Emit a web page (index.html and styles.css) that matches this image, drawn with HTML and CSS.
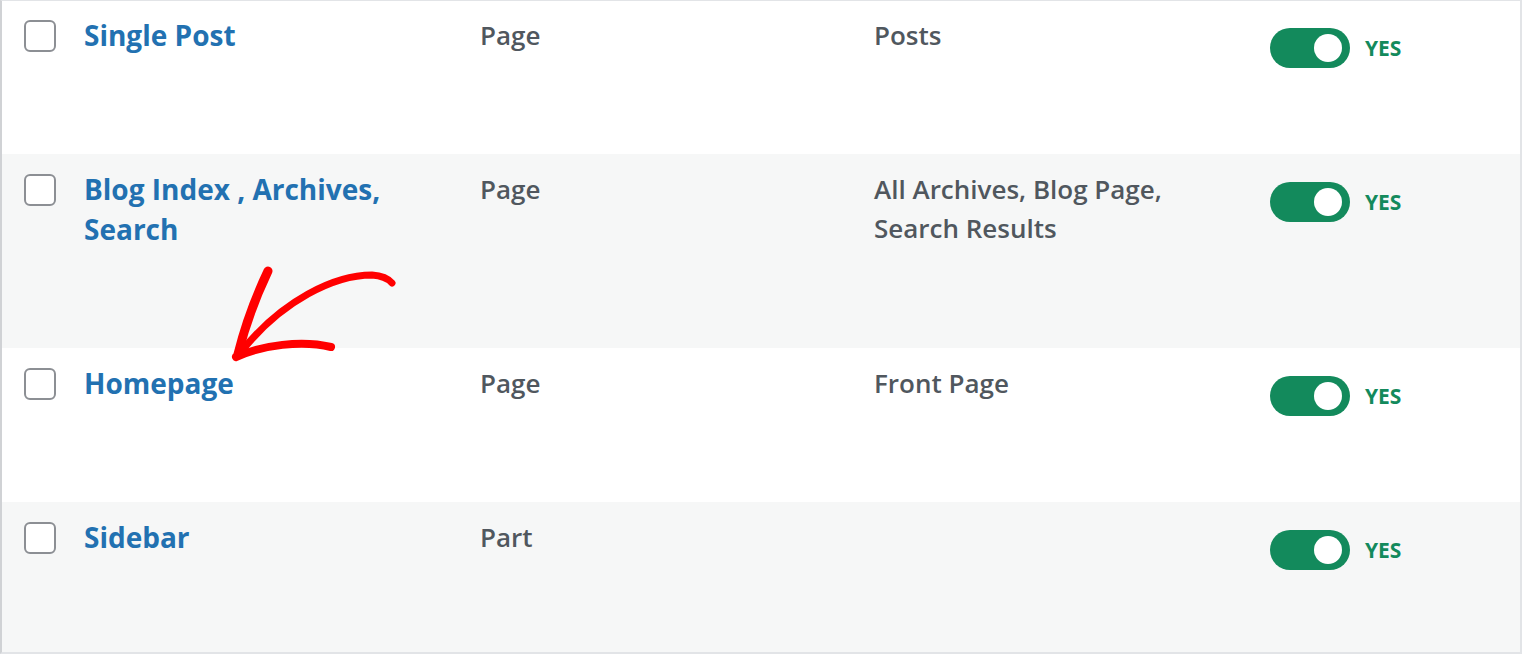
FILE: index.html
```html
<!DOCTYPE html>
<html lang="en">
<head>
<meta charset="utf-8">
<title>Templates</title>
<link rel="stylesheet" href="styles.css">
</head>
<body>
<div class="table">
  <div class="row first">
    <div class="cell-check"><span class="checkbox"></span></div>
    <div class="cell-title"><a class="title" href="#">Single Post</a></div>
    <div class="cell-text">Page</div>
    <div class="cell-cond">Posts</div>
    <div class="cell-toggle"><span class="toggle"><span class="knob"></span></span><span class="yes">YES</span></div>
  </div>
  <div class="row alt">
    <div class="cell-check"><span class="checkbox"></span></div>
    <div class="cell-title"><a class="title" href="#">Blog Index , Archives, Search</a></div>
    <div class="cell-text">Page</div>
    <div class="cell-cond">All Archives, Blog Page, Search Results</div>
    <div class="cell-toggle"><span class="toggle"><span class="knob"></span></span><span class="yes">YES</span></div>
  </div>
  <div class="row">
    <div class="cell-check"><span class="checkbox"></span></div>
    <div class="cell-title"><a class="title" href="#">Homepage</a></div>
    <div class="cell-text">Page</div>
    <div class="cell-cond">Front Page</div>
    <div class="cell-toggle"><span class="toggle"><span class="knob"></span></span><span class="yes">YES</span></div>
  </div>
  <div class="row alt">
    <div class="cell-check"><span class="checkbox"></span></div>
    <div class="cell-title"><a class="title" href="#">Sidebar</a></div>
    <div class="cell-text">Part</div>
    <div class="cell-cond"></div>
    <div class="cell-toggle"><span class="toggle"><span class="knob"></span></span><span class="yes">YES</span></div>
  </div>
  <svg class="arrow" width="1522" height="654" viewBox="0 0 1522 654" aria-hidden="true">
    <g fill="none" stroke="#ff0000" stroke-linecap="round" stroke-linejoin="round">
      <path d="M392 283 Q386 276 372 275 C335 275 282 300 241 352" stroke-width="7"/>
      <path d="M268 271 C258 292 246 322 238 354" stroke-width="9"/>
      <path d="M236 357 C262 345 302 340 331 347" stroke-width="8"/>
    </g>
  </svg>
</div>
</body>
</html>
```
FILE: styles.css
```css
html, body {
  margin: 0;
  padding: 0;
  background: #ffffff;
}

body {
  font-family: "Open Sans", "Liberation Sans", sans-serif;
}

.table {
  position: relative;
  height: 654px;
  box-sizing: border-box;
  overflow: hidden;
  border-top: 1px solid #e2e4e7;
  border-left: 2px solid #d0d2d5;
  border-right: 2px solid #e2e4e7;
  border-bottom: 2px solid #e2e4e7;
  background: #ffffff;
}

.row {
  display: grid;
  grid-template-columns: 82px 396px 394px 396px 1fr;
  align-items: start;
  background: #ffffff;
}

.row.alt {
  background: #f6f7f7;
}

.cell-check {
  padding: 20px 0 0 22px;
}

.first .cell-check {
  padding-top: 19px;
}

.checkbox {
  display: block;
  width: 32px;
  height: 32px;
  box-sizing: border-box;
  border: 2px solid #8c8f94;
  border-radius: 6px;
  background: #ffffff;
}

.cell-title {
  padding-top: 15px;
  padding-bottom: 99px;
  padding-right: 40px;
  line-height: 40px;
  font-size: 28px;
  font-weight: 700;
}

.first .cell-title {
  padding-top: 14px;
}

.title {
  color: #2271b1;
  text-decoration: none;
}

.cell-text,
.cell-cond {
  padding-top: 16px;
  padding-right: 40px;
  font-size: 26px;
  font-weight: 600;
  line-height: 39px;
  color: #50575e;
}

.first .cell-text,
.first .cell-cond {
  padding-top: 15px;
}

.cell-toggle {
  padding-top: 28px;
  display: flex;
  align-items: flex-start;
}

.first .cell-toggle {
  padding-top: 27px;
}

.toggle {
  position: relative;
  display: block;
  width: 80px;
  height: 40px;
  border-radius: 20px;
  background: #138a5c;
}

.knob {
  position: absolute;
  top: 6px;
  right: 8px;
  width: 28px;
  height: 28px;
  border-radius: 50%;
  background: #ffffff;
}

.yes {
  margin-left: 15px;
  font-size: 21px;
  font-weight: 700;
  line-height: 40px;
  color: #138a5c;
}

.arrow {
  position: absolute;
  left: -2px;
  top: -1px;
  pointer-events: none;
}
```
